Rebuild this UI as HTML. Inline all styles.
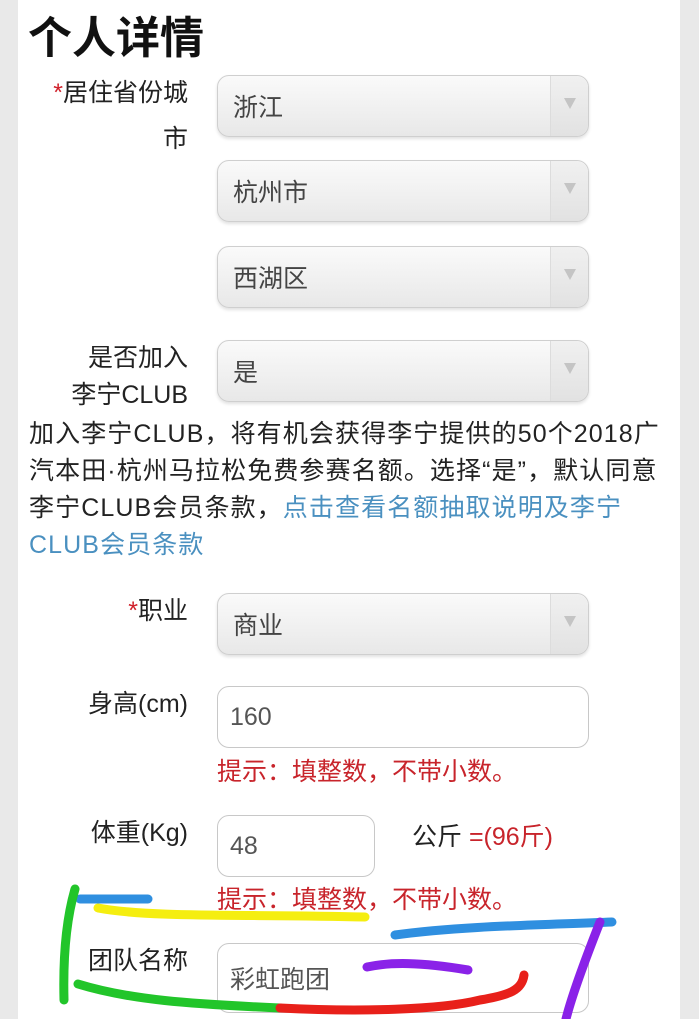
<!DOCTYPE html>
<html><head><meta charset="utf-8"><style>
html,body{margin:0;padding:0}
body{width:699px;height:1019px;background:#e9e9e9;position:relative;overflow:hidden;font-family:"Liberation Sans","Noto Sans CJK SC",sans-serif;}
.panel{position:absolute;left:18px;top:0;width:662px;height:1019px;background:#fff}
.a{position:absolute;white-space:nowrap}
.lbl{position:absolute;right:511px;font-size:25px;color:#222;text-align:right;line-height:37px;white-space:nowrap}
.sel{position:absolute;left:217px;width:372px;height:62px;border:1px solid #cfcfcf;border-radius:12px;background:linear-gradient(#fafafa,#e8e8e8);box-shadow:0 2px 3px rgba(0,0,0,.12);box-sizing:border-box}
.sel span{position:absolute;left:15px;top:12px;font-size:25px;color:#444}
.sel i{position:absolute;right:0;top:0;width:37px;height:60px;border-left:1px solid #dcdcdc;background:linear-gradient(#f0f0f0,#e2e2e2);border-radius:0 12px 12px 0}
.sel i:after{content:"";position:absolute;left:13px;top:22px;border-left:6px solid transparent;border-right:6px solid transparent;border-top:11px solid #c4c4c4}
.inp{position:absolute;left:217px;height:62px;border:1px solid #c8c8c8;border-radius:12px;box-sizing:border-box;background:#fff}
.inp span{position:absolute;left:12px;top:16px;font-size:25px;color:#555}
.hint{position:absolute;left:217px;font-size:25px;color:#c8242b}
p{position:absolute;left:29px;top:416px;margin:0;width:670px;font-size:25px;line-height:37px;color:#222;white-space:nowrap;letter-spacing:1.1px}
</style></head><body>
<div class="panel"></div>
<div class="a" style="left:28px;top:2px;font-size:44px;font-weight:bold;color:#111">个人详情</div>
<div class="lbl" style="top:75px"><span style="color:#d0202a">*</span>居住省份城</div>
<div class="lbl" style="top:121px">市</div>
<div class="sel" style="top:75px"><span>浙江</span><i></i></div>
<div class="sel" style="top:160px"><span>杭州市</span><i></i></div>
<div class="sel" style="top:246px"><span>西湖区</span><i></i></div>
<div class="lbl" style="top:340px">是否加入</div>
<div class="lbl" style="top:377px">李宁CLUB</div>
<div class="sel" style="top:340px"><span>是</span><i></i></div>
<p>加入李宁CLUB，将有机会获得李宁提供的50个2018广<br>汽本田·杭州马拉松免费参赛名额。选择“是”，默认同意<br>李宁CLUB会员条款，<span style="color:#4a90c0">点击查看名额抽取说明及李宁<br>CLUB会员条款</span></p>
<div class="lbl" style="top:593px"><span style="color:#d0202a">*</span>职业</div>
<div class="sel" style="top:593px"><span>商业</span><i></i></div>
<div class="lbl" style="top:686px">身高(cm)</div>
<div class="inp" style="top:686px;width:372px"><span>160</span></div>
<div class="hint" style="top:752px">提示：填整数，不带小数。</div>
<div class="lbl" style="top:815px">体重(Kg)</div>
<div class="inp" style="top:815px;width:158px"><span>48</span></div>
<div class="a" style="left:412px;top:817px;font-size:25px;color:#222">公斤 <span style="color:#c8242b">=(96斤)</span></div>
<div class="hint" style="top:880px">提示：填整数，不带小数。</div>
<div class="lbl" style="top:943px">团队名称</div>
<div class="inp" style="top:943px;width:372px;height:70px"><span>彩虹跑团</span></div>
<svg style="position:absolute;left:0;top:0" width="699" height="1019" fill="none" stroke-linecap="round" stroke-width="9">
<path d="M80 899 L148 899" stroke="#2f8fe0"/>
<path d="M98 908 C150 918 250 914 365 917" stroke="#f5ee10"/>
<path d="M75 889 C66 920 63 960 64 1000" stroke="#22c52a"/>
<path d="M78 984 C130 1000 190 1004 280 1008" stroke="#22c52a"/>
<path d="M280 1008 C360 1012 440 1010 480 1000 C510 995 522 990 524 975" stroke="#e8201a"/>
<path d="M395 935 C460 926 540 925 612 922" stroke="#2f8fe0"/>
<path d="M600 922 C585 960 572 995 566 1019" stroke="#8a22e8"/>
<path d="M367 967 C390 962 420 962 468 970" stroke="#8a22e8"/>
</svg>
</body></html>
